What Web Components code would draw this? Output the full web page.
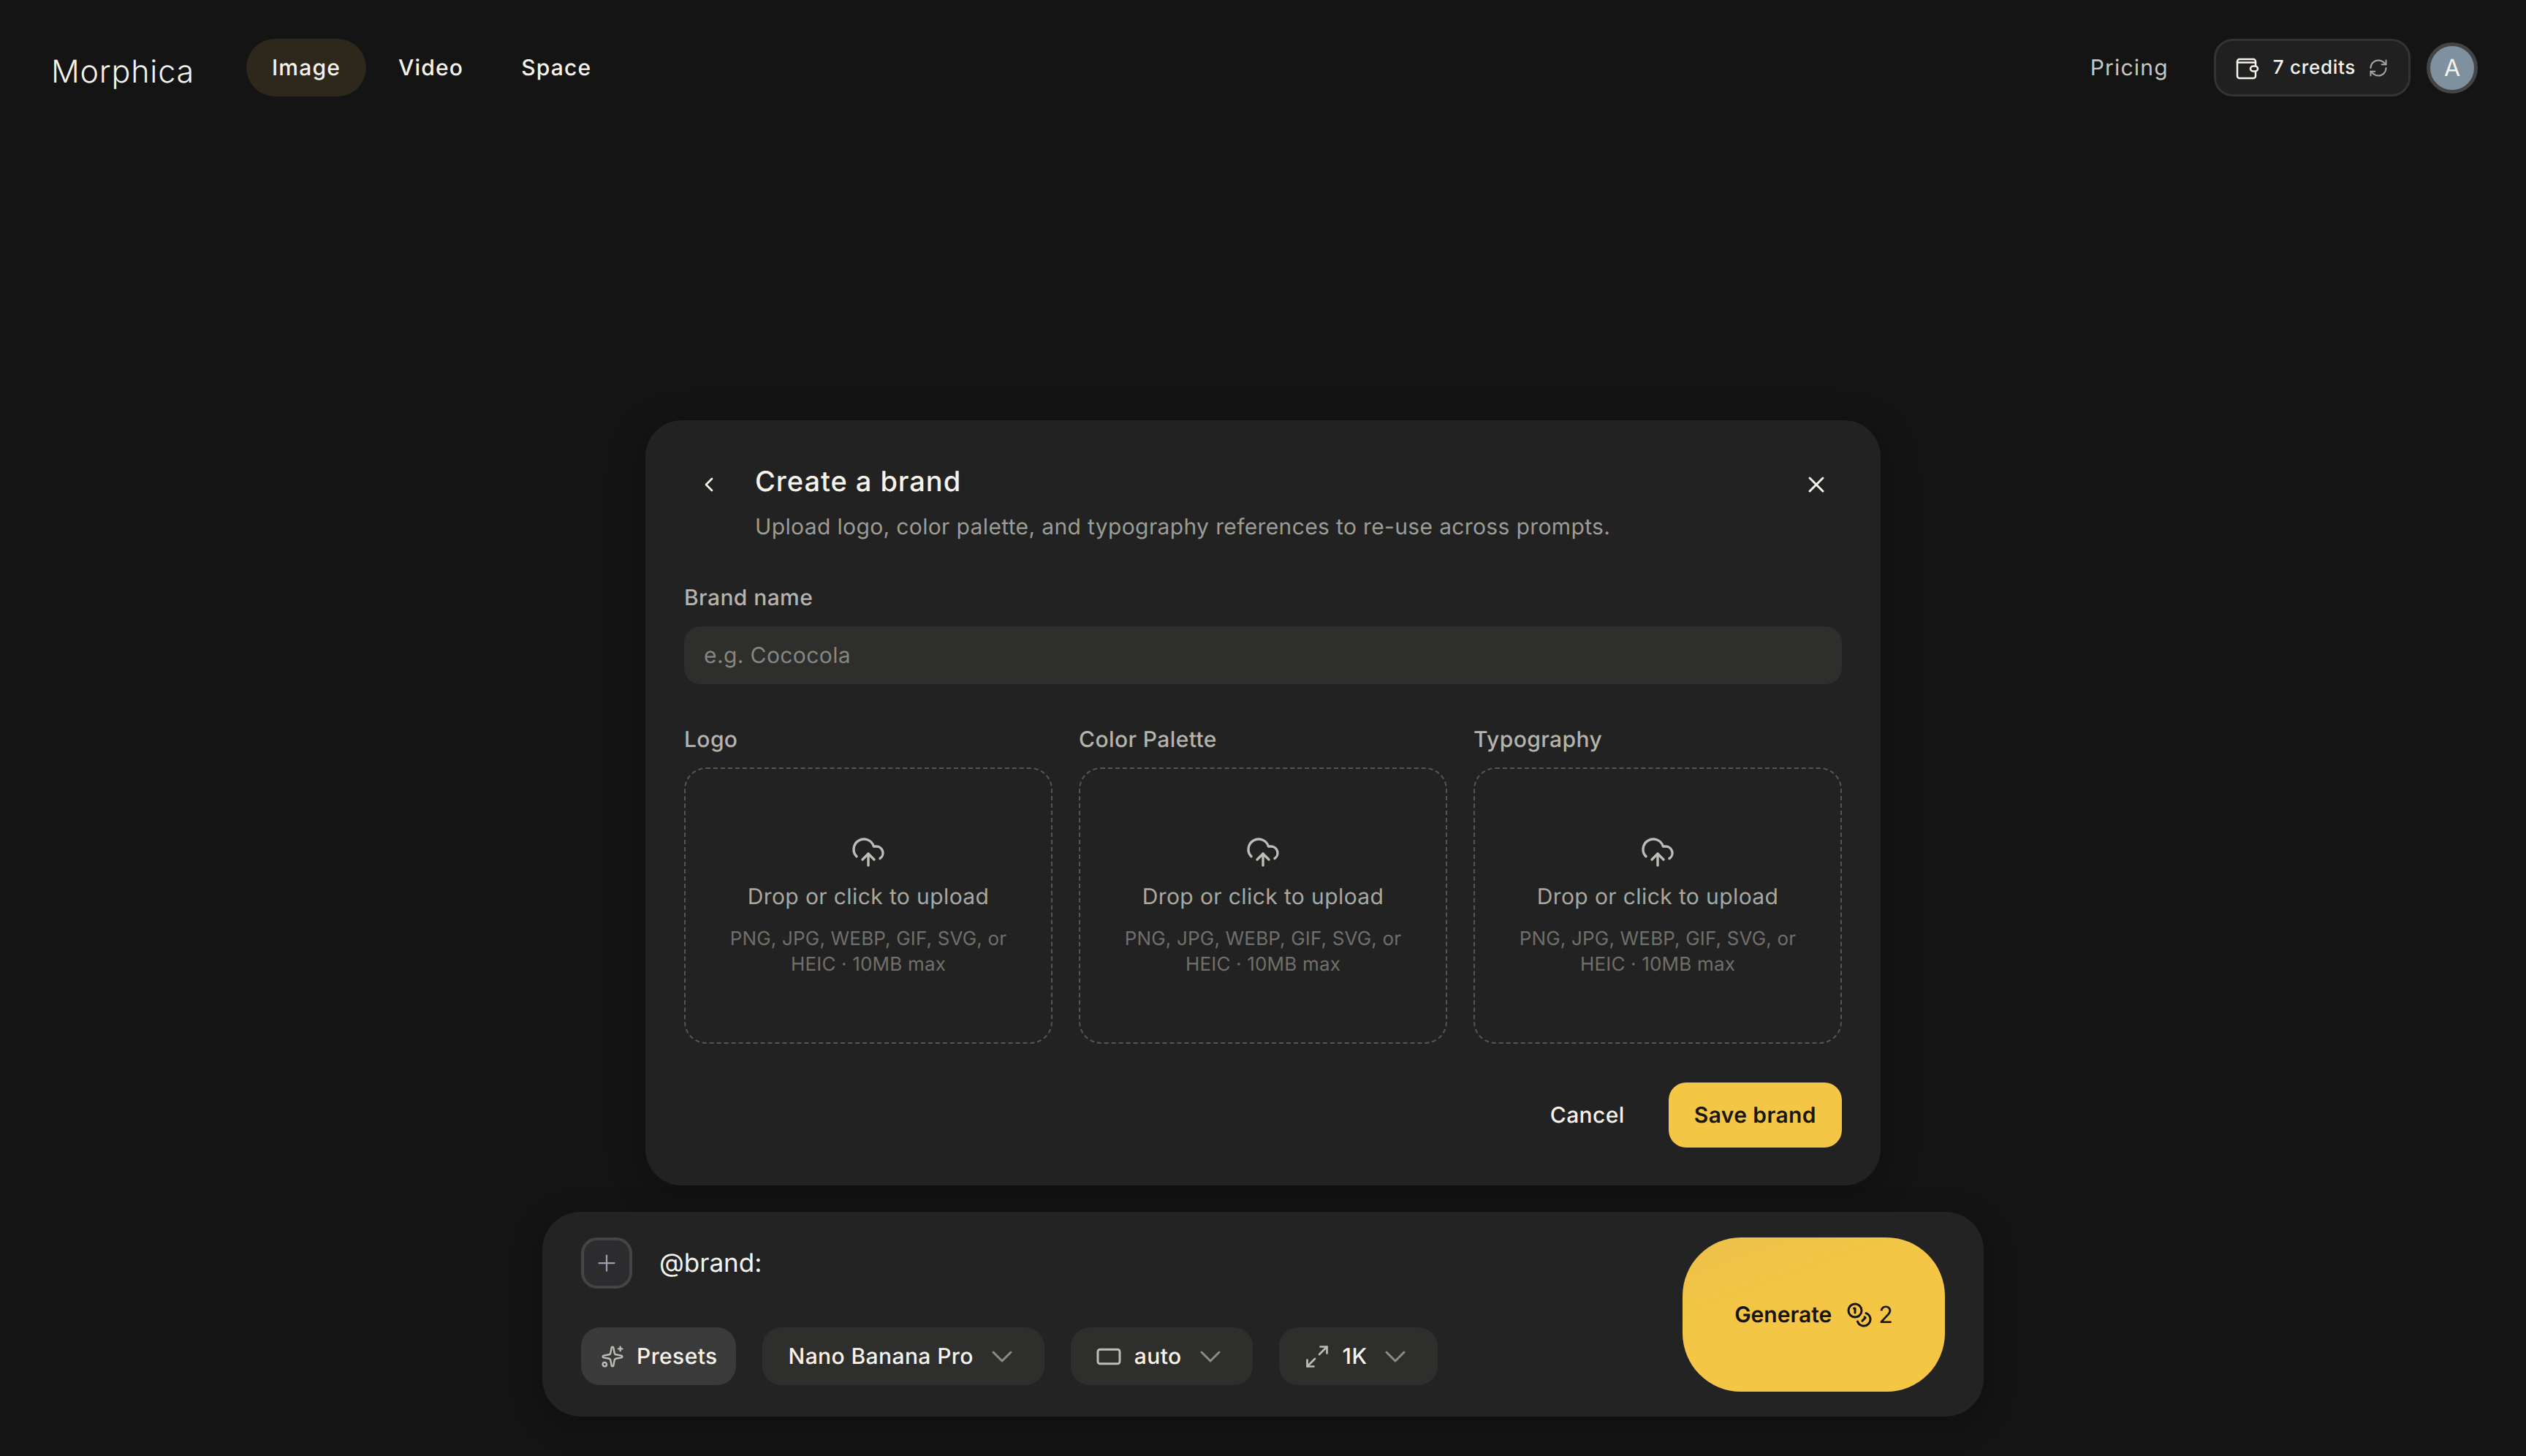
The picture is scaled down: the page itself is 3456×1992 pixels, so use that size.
<!DOCTYPE html>
<html lang="en">
<head>
<meta charset="utf-8">
<title>Morphica</title>
<style>
html,body{margin:0;padding:0;background:#141414;height:100%}
body{font-family:Inter,"Liberation Sans",sans-serif;color:#f6f3ec;-webkit-font-smoothing:antialiased;text-rendering:geometricPrecision}
</style>
</head>
<body>
<m-app>
  <m-header slot="header"></m-header>
  <m-brand-modal>
    <m-dropzone label="Logo"></m-dropzone>
    <m-dropzone label="Color Palette"></m-dropzone>
    <m-dropzone label="Typography"></m-dropzone>
  </m-brand-modal>
  <m-prompt-bar></m-prompt-bar>
</m-app>
<script>
const I = {
  chevD:'<svg width="28" height="16" viewBox="5 8 14 8" fill="none" stroke="currentColor" stroke-width="1.5" stroke-linecap="round" stroke-linejoin="round"><path d="m6 9 6 6 6-6"/></svg>',
  cloud:'<svg width="48" height="48" viewBox="0 0 24 24" fill="none" stroke="currentColor" stroke-width="1.7" stroke-linecap="round" stroke-linejoin="round"><path d="M12 13v8"/><path d="M4 14.899A7 7 0 1 1 15.71 8h1.79a4.5 4.5 0 0 1 2.5 8.242"/><path d="m8 17 4-4 4 4"/></svg>',
  refresh:'<svg width="28" height="28" viewBox="0 0 24 24" fill="none" stroke="currentColor" stroke-width="1.7" stroke-linecap="round" stroke-linejoin="round"><path d="M3 12a9 9 0 0 1 9-9 9.75 9.75 0 0 1 6.74 2.74L21 8"/><path d="M21 3v5h-5"/><path d="M21 12a9 9 0 0 1-9 9 9.75 9.75 0 0 1-6.74-2.74L3 16"/><path d="M8 16H3v5"/></svg>',
  wallet:'<svg width="32" height="32" viewBox="0 0 32 32" fill="none" stroke="currentColor" stroke-width="2.5" stroke-linecap="round" stroke-linejoin="round"><path d="M27 13V7a3 3 0 0 0-3-3H5a3 3 0 0 0-3 3v20a3 3 0 0 0 3 3h19a3 3 0 0 0 3-3v-6"/><path d="M2 8.5h25"/><rect x="20" y="13.5" width="10" height="7" rx="3.5"/></svg>',
  sparkle:'<svg width="32" height="32" viewBox="0 0 24 24" fill="none" stroke="currentColor" stroke-width="1.8" stroke-linecap="round" stroke-linejoin="round"><path d="M11.017 2.814a1 1 0 0 1 1.966 0l1.051 5.558a2 2 0 0 0 1.594 1.594l5.558 1.051a1 1 0 0 1 0 1.966l-5.558 1.051a2 2 0 0 0-1.594 1.594l-1.051 5.558a1 1 0 0 1-1.966 0l-1.051-5.558a2 2 0 0 0-1.594-1.594l-5.558-1.051a1 1 0 0 1 0-1.966l5.558-1.051a2 2 0 0 0 1.594-1.594z"/><path d="M20 2v4"/><path d="M22 4h-4"/><circle cx="4" cy="20" r="2"/></svg>',
  rect:'<svg width="36" height="36" viewBox="0 0 24 24" fill="none" stroke="currentColor" stroke-width="2" stroke-linecap="round" stroke-linejoin="round"><rect x="2" y="5.5" width="20" height="13" rx="2"/></svg>',
  max:'<svg width="36" height="36" viewBox="0 0 24 24" fill="none" stroke="currentColor" stroke-width="1.8" stroke-linecap="round" stroke-linejoin="round"><path d="M15 3h6v6"/><path d="m21 3-7 7"/><path d="m3 21 7-7"/><path d="M9 21H3v-6"/></svg>',
  coins:'<svg width="36" height="36" viewBox="0 0 24 24" fill="none" stroke="currentColor" stroke-width="2" stroke-linecap="round" stroke-linejoin="round"><circle cx="8" cy="8" r="6"/><path d="M18.09 10.37A6 6 0 1 1 10.34 18"/><path d="M7 6h1v4"/><path d="m16.71 13.88.7.71-2.82 2.82"/></svg>',
  plus:'<svg width="36" height="36" viewBox="0 0 24 24" fill="none" stroke="currentColor" stroke-width="1.5" stroke-linecap="round" stroke-linejoin="round"><path d="M5 12h14"/><path d="M12 5v14"/></svg>',
  back:'<svg width="32" height="32" viewBox="0 0 24 24" fill="none" stroke="currentColor" stroke-width="2" stroke-linecap="round" stroke-linejoin="round"><path d="m15 18-6-6 6-6"/></svg>',
  x:'<svg width="36" height="36" viewBox="0 0 24 24" fill="none" stroke="currentColor" stroke-width="2" stroke-linecap="round" stroke-linejoin="round"><path d="M18 6 6 18"/><path d="m6 6 12 12"/></svg>'
};
function comp(name, html){
  customElements.define(name, class extends HTMLElement{
    constructor(){super();this.attachShadow({mode:'open'});}
    connectedCallback(){
      this.shadowRoot.innerHTML = typeof html==='function'?html(this):html;
    }
  });
}
comp('m-app',`<style>
:host{display:flex;flex-direction:column;height:1992px;box-sizing:border-box;overflow:hidden;background:#141414}
main{flex:1;display:flex;flex-direction:column;align-items:center;justify-content:flex-end;gap:36px;padding-bottom:54px}
</style><slot name="header"></slot><main><slot></slot></main>`);

comp('m-nav-link',h=>`<style>
:host{display:block}
a{display:flex;align-items:center;height:79px;padding:0 35px;border-radius:40px;font:500 30px/1 Inter,sans-serif;letter-spacing:1.2px;color:#f6f3ec}
:host([active]) a{background:#2e281c}
</style><a><slot></slot></a>`);

comp('m-header',`<style>
:host{display:flex;align-items:center;justify-content:space-between;padding:53px 66px 0 70px;height:79px;flex:none}
.l,.r{display:flex;align-items:center}
.logo{font:300 43px/1 Inter,sans-serif;letter-spacing:.8px;width:267px;padding-top:12px;color:#f6f3ec}
nav{display:flex;gap:9px}
.pricing{font:400 30px/1 Inter,sans-serif;letter-spacing:1.2px;color:#c8c7c1;margin-right:62px}
.credits{display:flex;align-items:center;box-sizing:border-box;height:79px;border:3px solid #333;background:#202020;border-radius:26px;padding:0 27px 0 27px;font:500 26px/1 Inter,sans-serif;letter-spacing:.7px;color:#f6f3ec}
.credits .t{margin:0 17px 0 19px}
.credits .rf{color:#a8a8a2;display:flex}
.credits .w{display:flex}
.av{box-sizing:border-box;width:70px;height:70px;border-radius:50%;border:5px solid #444;background:#7f919e;margin-left:22px;display:flex;align-items:center;justify-content:center;font:400 32px/1 Inter,sans-serif;color:#f6f3ec}
</style>
<div class="l"><div class="logo">Morphica</div><nav><m-nav-link active>Image</m-nav-link><m-nav-link>Video</m-nav-link><m-nav-link>Space</m-nav-link></nav></div>
<div class="r"><div class="pricing">Pricing</div><div class="credits"><span class="w">${I.wallet}</span><span class="t">7 credits</span><span class="rf">${I.refresh}</span></div><div class="av">A</div></div>`);

comp('m-dropzone',h=>`<style>
:host{display:flex;flex-direction:column;gap:17px;min-width:0}
.lab{font:500 30px/41px Inter,sans-serif;letter-spacing:.4px;color:#b4b3ad}
.box{box-sizing:border-box;height:378px;border:2px dashed #555;border-radius:30px;display:flex;flex-direction:column;align-items:center;justify-content:center;text-align:center;padding:0 40px}
.ic{display:flex;color:#bdbcb6;margin-bottom:18px}
.t{font:400 30px/39px Inter,sans-serif;letter-spacing:.4px;color:#a8a8a2;margin-bottom:20px}
.s{font:400 26px/35px Inter,sans-serif;letter-spacing:.18px;color:#6f6f6b}
</style>
<div class="lab">${h.getAttribute('label')}</div>
<div class="box"><span class="ic">${I.cloud}</span><div class="t">Drop or click to upload</div><div class="s">PNG, JPG, WEBP, GIF, SVG, or HEIC · 10MB max</div></div>`);

comp('m-brand-modal',`<style>
:host{display:block;box-sizing:border-box;width:1690px;background:#222;border-radius:50px;padding:59px 53px 52px;box-shadow:0 12px 50px rgba(0,0,0,.25)}
.head{display:flex;align-items:flex-start;margin-bottom:54px}
.ib{display:flex;align-items:center;justify-content:center;height:58px;color:#f6f3ec;flex:none}
.back{width:68px;margin-right:29px}
.close{width:70px}
.hd{flex:1;min-width:0}
h2{margin:0 0 16px;padding-top:1px;font:500 38px/48px Inter,sans-serif;letter-spacing:.95px;color:#f6f3ec}
p{margin:0;font:400 30px/44px Inter,sans-serif;letter-spacing:.36px;color:#9c9c96}
.lab{font:500 30px/42px Inter,sans-serif;letter-spacing:.4px;color:#b4b3ad;margin-bottom:18px}
.inp{box-sizing:border-box;height:79px;background:#2e2e2c;border-radius:22px;padding:1px 27px 0;display:flex;align-items:center;font:400 30px/1 Inter,sans-serif;letter-spacing:.4px;color:#868681;margin-bottom:56px}
.grid{display:grid;grid-template-columns:repeat(3,1fr);gap:36px;margin-bottom:53px}
.foot{display:flex;justify-content:flex-end;align-items:center}
.cancel{font:500 30px/1 Inter,sans-serif;letter-spacing:.4px;color:#f6f3ec;margin-right:60px}
.save{display:flex;align-items:center;height:89px;padding:0 35px;background:#f5c645;border-radius:24px;font:600 30px/1 Inter,sans-serif;letter-spacing:.4px;color:#1a1710}
</style>
<div class="head"><span class="ib back">${I.back}</span><div class="hd"><h2>Create a brand</h2><p>Upload logo, color palette, and typography references to re-use across prompts.</p></div><span class="ib close">${I.x}</span></div>
<div class="lab">Brand name</div>
<div class="inp">e.g. Cococola</div>
<div class="grid"><slot></slot></div>
<div class="foot"><span class="cancel">Cancel</span><span class="save">Save brand</span></div>`);

comp('m-chip',h=>`<style>
:host{display:flex;align-items:center;box-sizing:border-box;height:79px;background:#2e2e2c;border-radius:26px;font:500 30px/1 Inter,sans-serif;letter-spacing:.4px;color:#f6f3ec;padding:0 var(--pr,44px) 0 var(--pl,36px)}
:host([strong]){background:#3a3a3a;padding:0 25px 0 27px}
span{display:flex;align-items:center}
.lead{color:#bdbcb6}
.chev{color:#8a8a86;margin-left:var(--cg,25px)}
</style><span class="lead"><slot name="icon"></slot></span><slot></slot>${h.hasAttribute('strong')?'':`<span class="chev">${I.chevD}</span>`}`);

comp('m-prompt-bar',`<style>
:host{display:flex;box-sizing:border-box;width:1972px;height:280px;background:#232323;border-radius:52px;padding:35px 53px 0;box-shadow:0 10px 40px rgba(0,0,0,.25);flex:none}
.col{flex:1;display:flex;flex-direction:column;gap:53px}
.top{display:flex;align-items:center;height:70px}
.add{box-sizing:border-box;width:70px;height:70px;border:4px solid #444;background:#2c2c2e;border-radius:22px;display:flex;align-items:center;justify-content:center;color:#9aa0ad;margin-right:37px}
.txt{font:400 35px/1 Inter,sans-serif;color:#f6f3ec;padding-top:1px}
.chips{display:flex;gap:36px}
.gen{box-sizing:border-box;width:359px;height:211px;border-radius:80px;background:linear-gradient(160deg,#ecc149 0%,#f5c645 45%);display:flex;align-items:center;justify-content:center;font:600 30px/1 Inter,sans-serif;color:#16140e;flex:none}
.gen .c{display:flex;margin:0 8px 0 20px}
.gen .n{font-weight:400;font-size:32px}
svg{display:block}
.p{margin-right:17px}
.a{--pl:34px}
.k{--pl:34px}
</style>
<div class="col">
  <div class="top"><span class="add">${I.plus}</span><span class="txt">@brand:</span></div>
  <div class="chips">
    <m-chip strong><span slot="icon" class="p">${I.sparkle}</span>Presets</m-chip>
    <m-chip>Nano Banana Pro</m-chip>
    <m-chip class="a"><span slot="icon" class="p">${I.rect}</span>auto</m-chip>
    <m-chip class="k"><span slot="icon" class="p">${I.max}</span>1K</m-chip>
  </div>
</div>
<div class="gen">Generate<span class="c">${I.coins}</span><span class="n">2</span></div>`);
</script>
</body>
</html>
